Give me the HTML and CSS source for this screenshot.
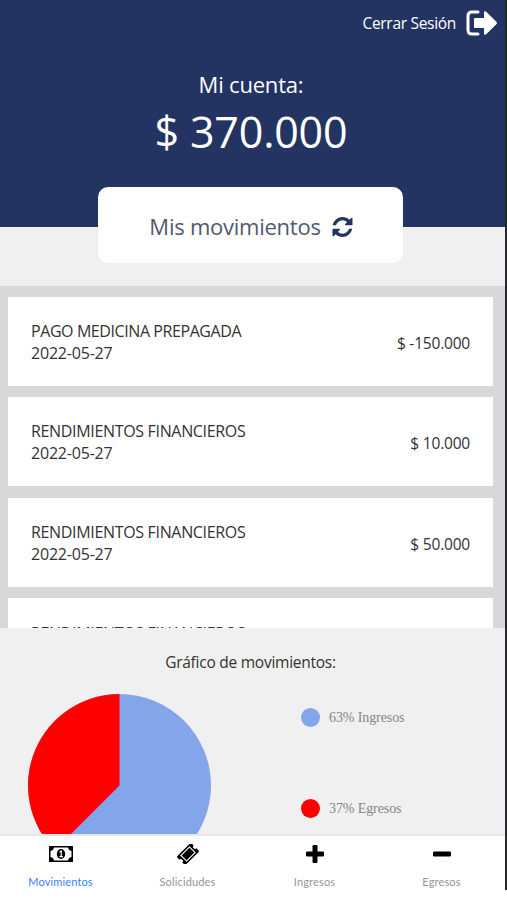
FILE: index.html
```
<!DOCTYPE html>
<html lang="es">
<head>
    <meta charset="UTF-8">
    <meta name="viewport" content="width=device-width, initial-scale=1.0">
    <title>Mi cuenta</title>
    <link rel="stylesheet" href="styles.css">
</head>
<body>
    <div class="app">
        <header class="header">
            <div class="logout">
                <span class="logout-text">Cerrar Sesión</span>
                <svg class="logout-icon" viewBox="0 0 32 26">
                    <path d="M12 2H6Q2 2 2 6V20Q2 24 6 24H12" fill="none" stroke="#fff" stroke-width="3" stroke-linecap="round"/>
                    <path d="M9 8H18V2.2Q18.4 .6 20 1.6L30.6 12Q31.4 13 30.6 14L20 24.4Q18.4 25.4 18 23.8V18H9Q8 18 8 17V9Q8 8 9 8Z" fill="#fff"/>
                </svg>
            </div>
            <p class="account-label">Mi cuenta:</p>
            <h1 class="account-total">$ 370.000</h1>
        </header>

        <div class="refresh-box">
            <span class="refresh-text">Mis movimientos</span>
            <svg class="refresh-icon" viewBox="0 0 1536 1536">
                <path d="M1511 928q0 5-1 7-64 268-268 434.5t-478 166.5q-146 0-282.5-55t-243.5-157l-129 129q-19 19-45 19t-45-19-19-45v-448q0-26 19-45t45-19h448q26 0 45 19t19 45-19 45l-137 137q71 66 161 102t187 36q134 0 250-65t186-179q11-17 53-117 8-23 30-23h192q13 0 22.5 9.5t9.5 22.5zm25-800v448q0 26-19 45t-45 19h-448q-26 0-45-19t-19-45 19-45l138-138q-148-137-349-137-134 0-250 65t-186 179q-11 17-53 117-8 23-30 23h-199q-13 0-22.5-9.5t-9.5-22.5v-7q65-268 270-434.5t480-166.5q146 0 284 55.5t245 156.5l130-129q19-19 45-19t45 19 19 45z"/>
            </svg>
        </div>

        <section class="movements">
            <div class="movement">
                <div>
                    <p class="name name-long">PAGO MEDICINA PREPAGADA</p>
                    <p class="date">2022-05-27</p>
                </div>
                <p class="amount">$ -150.000</p>
            </div>
            <div class="movement">
                <div>
                    <p class="name">RENDIMIENTOS FINANCIEROS</p>
                    <p class="date">2022-05-27</p>
                </div>
                <p class="amount">$ 10.000</p>
            </div>
            <div class="movement">
                <div>
                    <p class="name">RENDIMIENTOS FINANCIEROS</p>
                    <p class="date">2022-05-27</p>
                </div>
                <p class="amount">$ 50.000</p>
            </div>
            <div class="movement">
                <div>
                    <p class="name">RENDIMIENTOS FINANCIEROS</p>
                </div>
            </div>
        </section>

        <section class="chart">
            <h2 class="chart-title">Gráfico de movimientos:</h2>
            <div class="chart-body">
                <svg class="pie" viewBox="-91.5 -91.5 183 183">
                    <circle r="91.5" fill="#84a5ea"/>
                    <path d="M0 0V-91.5A91.5 91.5 0 0 0 -64.7 64.7Z" fill="#f00"/>
                </svg>
                <ul class="legend">
                    <li><span class="dot income"></span>63% Ingresos</li>
                    <li><span class="dot expense"></span>37% Egresos</li>
                </ul>
            </div>
        </section>

        <nav class="tabs">
            <div class="tab active">
                <svg viewBox="0 0 26 20">
                    <rect x="1" y="2" width="24" height="16" fill="#000"/>
                    <path d="M6 3.5H20Q20.5 6.5 23.5 7V13Q20.5 13.5 20 16.5H6Q5.500 13.500 2.500 13V7Q5.500 6.500 6 3.500Z" fill="#fff"/>
                    <ellipse cx="13" cy="10" rx="4.2" ry="5" fill="#000"/>
                    <path d="M11.600 8L13.200 7V12.600M11.400 12.700H15" fill="none" stroke="#fff" stroke-width="1.2"/>
                </svg>
                <span>Movimientos</span>
            </div>
            <div class="tab">
                <svg viewBox="0 0 26 20">
                    <g transform="rotate(-45 13 10)">
                        <path d="M4 4H22Q23 4 23 5V8A2 2 0 0 0 23 12V15Q23 16 22 16H4Q3 16 3 15V12A2 2 0 0 0 3 8V5Q3 4 4 4Z" fill="#000"/>
                        <rect x="7" y="6" width="12" height="8" fill="none" stroke="#fff" stroke-width="1.1"/>
                    </g>
                </svg>
                <span>Solicidudes</span>
            </div>
            <div class="tab">
                <svg viewBox="0 0 26 20">
                    <rect x="4" y="7.5" width="18" height="5" rx="1.3" fill="#000"/>
                    <rect x="10.5" y="1" width="5" height="18" rx="1.3" fill="#000"/>
                </svg>
                <span>Ingresos</span>
            </div>
            <div class="tab">
                <svg viewBox="0 0 26 20">
                    <rect x="4" y="7.5" width="18" height="5" rx="1.3" fill="#000"/>
                </svg>
                <span>Egresos</span>
            </div>
        </nav>
    </div>
</body>
</html>
```
FILE: styles.css
```
* {
    box-sizing: border-box;
}

body {
    margin: 0;
    height: 900px;
    overflow: hidden;
    background-color: #fff;
    font-family: "Open Sans", "Noto Sans", sans-serif;
    color: #333;
}

p, h1, h2, ul {
    margin: 0;
    padding: 0;
    font-weight: 400;
    white-space: nowrap;
}

.app {
    height: 890px;
    border-right: 2px solid #25272d;
    background-color: #f0f0f0;
    display: flex;
    flex-direction: column;
}

.header {
    height: 227px;
    flex: none;
    background-color: #243462;
    color: #fff;
    text-align: center;
}

.logout {
    height: 46px;
    display: flex;
    align-items: center;
    justify-content: flex-end;
    padding-right: 7px;
    gap: 10px;
}

.logout-text {
    font-size: 15.5px;
    letter-spacing: -0.3px;
}

.logout-icon {
    width: 32px;
    height: 26px;
}

.account-label {
    margin-top: 21px;
    padding-right: 3px;
    font-size: 22px;
    line-height: 34px;
    letter-spacing: -0.2px;
}

.account-total {
    padding-right: 3px;
    font-size: 43px;
    line-height: 61px;
    letter-spacing: -0.2px;
}

.refresh-box {
    position: relative;
    width: 305px;
    height: 76px;
    flex: none;
    margin: -40px 0 23px 98px;
    border-radius: 10px;
    background-color: #fff;
    display: flex;
    align-items: center;
    justify-content: center;
    gap: 11px;
    padding: 3px 0 0 1px;
}

.refresh-text {
    margin-top: -2px;
    font-size: 22px;
    letter-spacing: -0.25px;
    color: #505970;
}

.refresh-icon {
    width: 21px;
    height: 20px;
    fill: #243462;
}

.movements {
    height: 342px;
    flex: none;
    overflow: hidden;
    background-color: #d8d8d8;
    padding: 11px 12px 0 8px;
}

.movement {
    height: 89px;
    margin-bottom: 11.3px;
    padding: 23px 23px 0;
    background-color: #fff;
    display: flex;
    justify-content: space-between;
    font-size: 16px;
    line-height: 22px;
}

.movement:last-child {
    padding-top: 24px;
}

.name {
    letter-spacing: -0.33px;
}

.name-long {
    letter-spacing: -0.42px;
}

.date {
    letter-spacing: -0.2px;
}

.amount {
    padding-top: 12px;
    font-size: 15.5px;
    letter-spacing: -0.2px;
}

.chart {
    height: 206px;
    flex: none;
    overflow: hidden;
}

.chart-title {
    padding-top: 22px;
    padding-right: 4px;
    text-align: center;
    font-size: 15.5px;
    line-height: 24px;
    letter-spacing: -0.25px;
}

.chart-body {
    display: flex;
    padding: 20px 0 0 28px;
}

.pie {
    width: 183px;
    height: 183px;
    flex: none;
}

.legend {
    list-style: none;
    padding: 13px 0 0 90px;
    font-family: "Liberation Serif", serif;
    font-size: 14px;
    letter-spacing: -0.1px;
    color: #858585;
}

.legend li {
    height: 21px;
    margin-bottom: 70px;
    display: flex;
    align-items: center;
    gap: 9px;
}

.dot {
    width: 19px;
    height: 19px;
    border-radius: 50%;
}

.income {
    background-color: #84a5ea;
}

.expense {
    background-color: #f00;
}

.tabs {
    height: 56px;
    flex: none;
    border-top: 2px solid #e6e6e6;
    background-color: #fff;
    display: flex;
}

.tab {
    width: 127px;
    flex: none;
    display: flex;
    flex-direction: column;
    align-items: center;
    padding-top: 8px;
    font-family: Lato, sans-serif;
    font-size: 11px;
    line-height: 14px;
    letter-spacing: 0.15px;
    color: #969696;
}

.tab:first-child {
    width: 124px;
    padding-right: 3px;
}

.tab svg {
    width: 26px;
    height: 20px;
    flex: none;
    margin-bottom: 11px;
}

.active {
    color: #3880ff;
}
```
